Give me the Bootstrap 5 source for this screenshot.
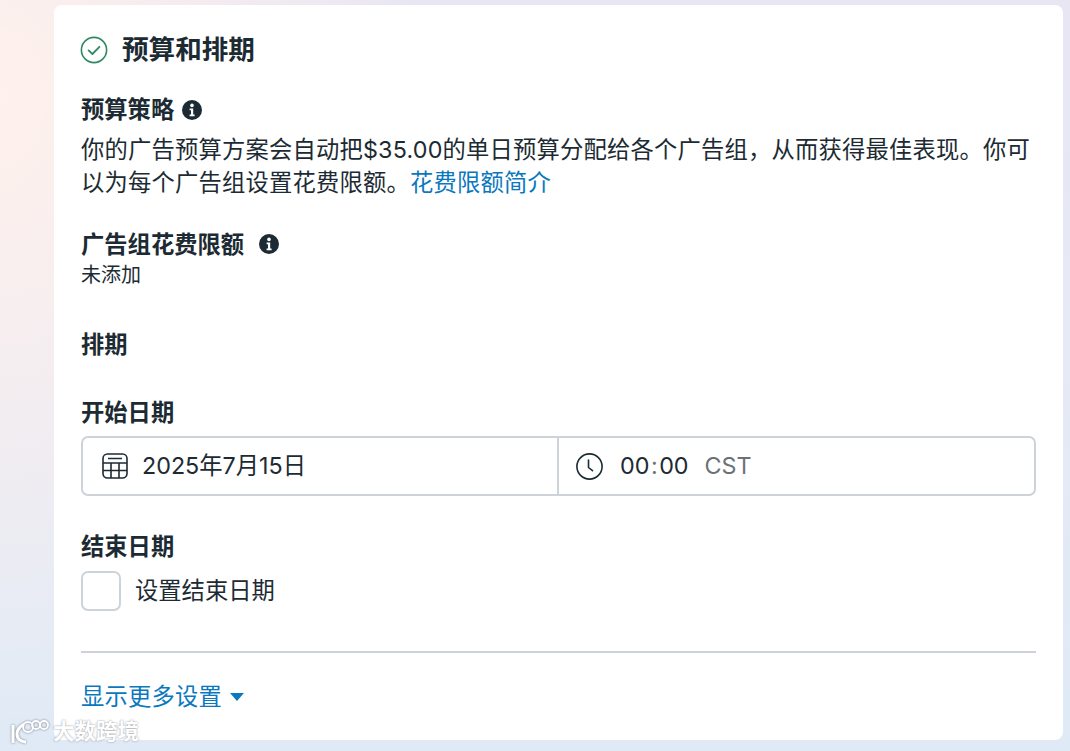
<!DOCTYPE html>
<html lang="zh-CN">
<head>
    <meta charset="UTF-8">
    <meta name="viewport" content="width=device-width, initial-scale=1.0">
    <title>预算和排期</title>
    <link href="https://cdn.jsdelivr.net/npm/bootstrap@5.3.0/dist/css/bootstrap.min.css" rel="stylesheet">
    <style>
        html, body { height: 100%; }
        body {
            overflow: hidden;
            font-family: Inter, "Noto Sans CJK SC", sans-serif;
            color: #1c2b33;
            background:
                radial-gradient(ellipse 420px 650px at 0 100px, #fff1ec 0%, rgba(255,241,236,0) 100%),
                linear-gradient(180deg, #e9e6f3 0%, #e6e9f6 45%, #dfeaf6 100%);
        }
        .page-wrap { height: 751px; padding: 5px 7px 11px 54px; position: relative; }
        .setup-panel { height: 735px; background: #fff; border-radius: 8px; padding: 27px 27px 0; }
        .title-row svg { margin-left: -1px; }
        .panel-title { font-size: 26.6px; line-height: 34px; font-weight: 700; margin: 0 0 2px 6px; }
        .sub-head { font-size: 23.3px; line-height: 28px; font-weight: 700; margin: 0; }
        .strategy-head { margin-top: 28px; margin-bottom: 9px; }
        .body-copy { font-size: 23.3px; line-height: 33px; letter-spacing: .2px; margin: 0; }
        .body-copy a, .more-link { color: #0a78be; text-decoration: none; }
        .limit-head { margin-top: 32px; margin-bottom: 3px; }
        .limit-head svg { margin-left: 15px; margin-bottom: 2px; }
        .muted-line { font-size: 20px; line-height: 26px; }
        .sched-head { margin-top: 43px; }
        .start-head { margin-top: 40px; margin-bottom: 9px; }
        .date-box { width: 955px; height: 60px; border: 2px solid #ced3d9; border-radius: 7px; }
        .date-cell { padding-left: 19px; font-size: 23.3px; }
        .date-cell:first-child { flex: 0 0 474px; gap: 14px; }
        .date-cell + .date-cell { flex: 1; border-left: 2px solid #ced3d9; padding-left: 17px; }
        .time-text { margin-left: 17px; }
        .time-colon { margin: 0 1.5px; }
        .tz-text { color: #6b7276; }
        .end-head { margin-top: 37px; margin-bottom: 10px; }
        .check-row { gap: 14px; }
        .check-box { width: 40px; height: 40px; border: 2px solid #ced3d9; border-radius: 7px; }
        .check-label { font-size: 23.3px; }
        .panel-rule { border-top: 2px solid #ced3d9; width: 955px; margin-top: 40px; margin-bottom: 28px; }
        .more-link { font-size: 23.3px; line-height: 32px; letter-spacing: .2px; }
        .caret-down { width: 0; height: 0; border-left: 7px solid transparent; border-right: 7px solid transparent; border-top: 8px solid #0a78be; }
        .watermark { position: absolute; left: 9px; top: 716px; color: #fff; font-size: 21.5px; line-height: 30px; font-weight: 700; text-shadow: 0 0 2px rgba(90,100,110,.75); }
        .watermark svg { filter: drop-shadow(0 0 1px rgba(90,100,110,.8)); }
    </style>
</head>
<body>
    <div class="page-wrap">
        <div class="setup-panel">
            <div class="title-row d-flex align-items-center gap-2">
                <svg width="28" height="28" viewBox="0 0 28 28" fill="none" stroke="#2f8a63" stroke-width="1.6">
                    <circle cx="14" cy="14" r="12.6"/>
                    <path d="M8.6 14.4l3.8 3.6 7-7.2" stroke-width="1.8" stroke-linecap="round" stroke-linejoin="round"/>
                </svg>
                <h1 class="panel-title">预算和排期</h1>
            </div>

            <div class="d-flex align-items-center gap-2 strategy-head">
                <h2 class="sub-head">预算策略</h2>
                <svg width="20" height="20" viewBox="0 0 20 20"><circle cx="10" cy="10" r="10" fill="#1c2b33"/><circle cx="10" cy="5.4" r="1.8" fill="#fff"/><path d="M7.6 8.6h3.6v6h1.4v1.6H7.6v-1.6h1.4v-4.4H7.6z" fill="#fff"/></svg>
            </div>
            <p class="body-copy">你的广告预算方案会自动把$35.00的单日预算分配给各个广告组，从而获得最佳表现。你可以为每个广告组设置花费限额。<a href="#">花费限额简介</a></p>

            <div class="d-flex align-items-center limit-head">
                <h2 class="sub-head">广告组花费限额</h2>
                <svg width="20" height="20" viewBox="0 0 20 20"><circle cx="10" cy="10" r="10" fill="#1c2b33"/><circle cx="10" cy="5.4" r="1.8" fill="#fff"/><path d="M7.6 8.6h3.6v6h1.4v1.6H7.6v-1.6h1.4v-4.4H7.6z" fill="#fff"/></svg>
            </div>
            <div class="muted-line">未添加</div>

            <h2 class="sub-head sched-head">排期</h2>
            <h2 class="sub-head start-head">开始日期</h2>
            <div class="date-box d-flex">
                <div class="date-cell d-flex align-items-center">
                    <svg width="26" height="26" viewBox="0 0 26 26" fill="none" stroke="#1c2b33" stroke-width="1.6">
                        <rect x="1" y="1" width="24" height="24" rx="4.5"/>
                        <path d="M6 5.5h14M1 10h24M1 17.5h24M9 10v15M17 10v15"/>
                    </svg>
                    <span>2025年7月15日</span>
                </div>
                <div class="date-cell d-flex align-items-center">
                    <svg width="27" height="27" viewBox="0 0 27 27" fill="none" stroke="#1c2b33" stroke-width="1.6">
                        <circle cx="13.5" cy="13.5" r="12.6"/>
                        <path d="M12.5 7v7.5l4 3.2" stroke-linecap="round" stroke-linejoin="round"/>
                    </svg>
                    <span class="time-text">00<span class="tz-text time-colon">:</span>00</span>
                    <span class="tz-text ms-3">CST</span>
                </div>
            </div>

            <h2 class="sub-head end-head">结束日期</h2>
            <div class="check-row d-flex align-items-center">
                <div class="check-box"></div>
                <span class="check-label">设置结束日期</span>
            </div>

            <div class="panel-rule"></div>
            <a class="more-link d-inline-flex align-items-center gap-2" href="#">显示更多设置 <span class="caret-down"></span></a>
        </div>
        <div class="watermark d-flex align-items-center gap-1">
            <svg width="40" height="26" viewBox="0 0 40 26" fill="none" stroke="#fff" stroke-width="3">
                <path d="M4 7v18M15 6C10 9 8 13 8 16c0 5 4 8 9 8"/>
                <circle cx="19" cy="9" r="5" stroke-width="1.8"/>
                <circle cx="27" cy="7" r="4" stroke-width="1.8"/>
                <circle cx="35" cy="7" r="4" stroke-width="1.8"/>
            </svg>
            <span>大数跨境</span>
        </div>
    </div>
    <script src="https://cdn.jsdelivr.net/npm/bootstrap@5.3.0/dist/js/bootstrap.bundle.min.js"></script>
</body>
</html>
